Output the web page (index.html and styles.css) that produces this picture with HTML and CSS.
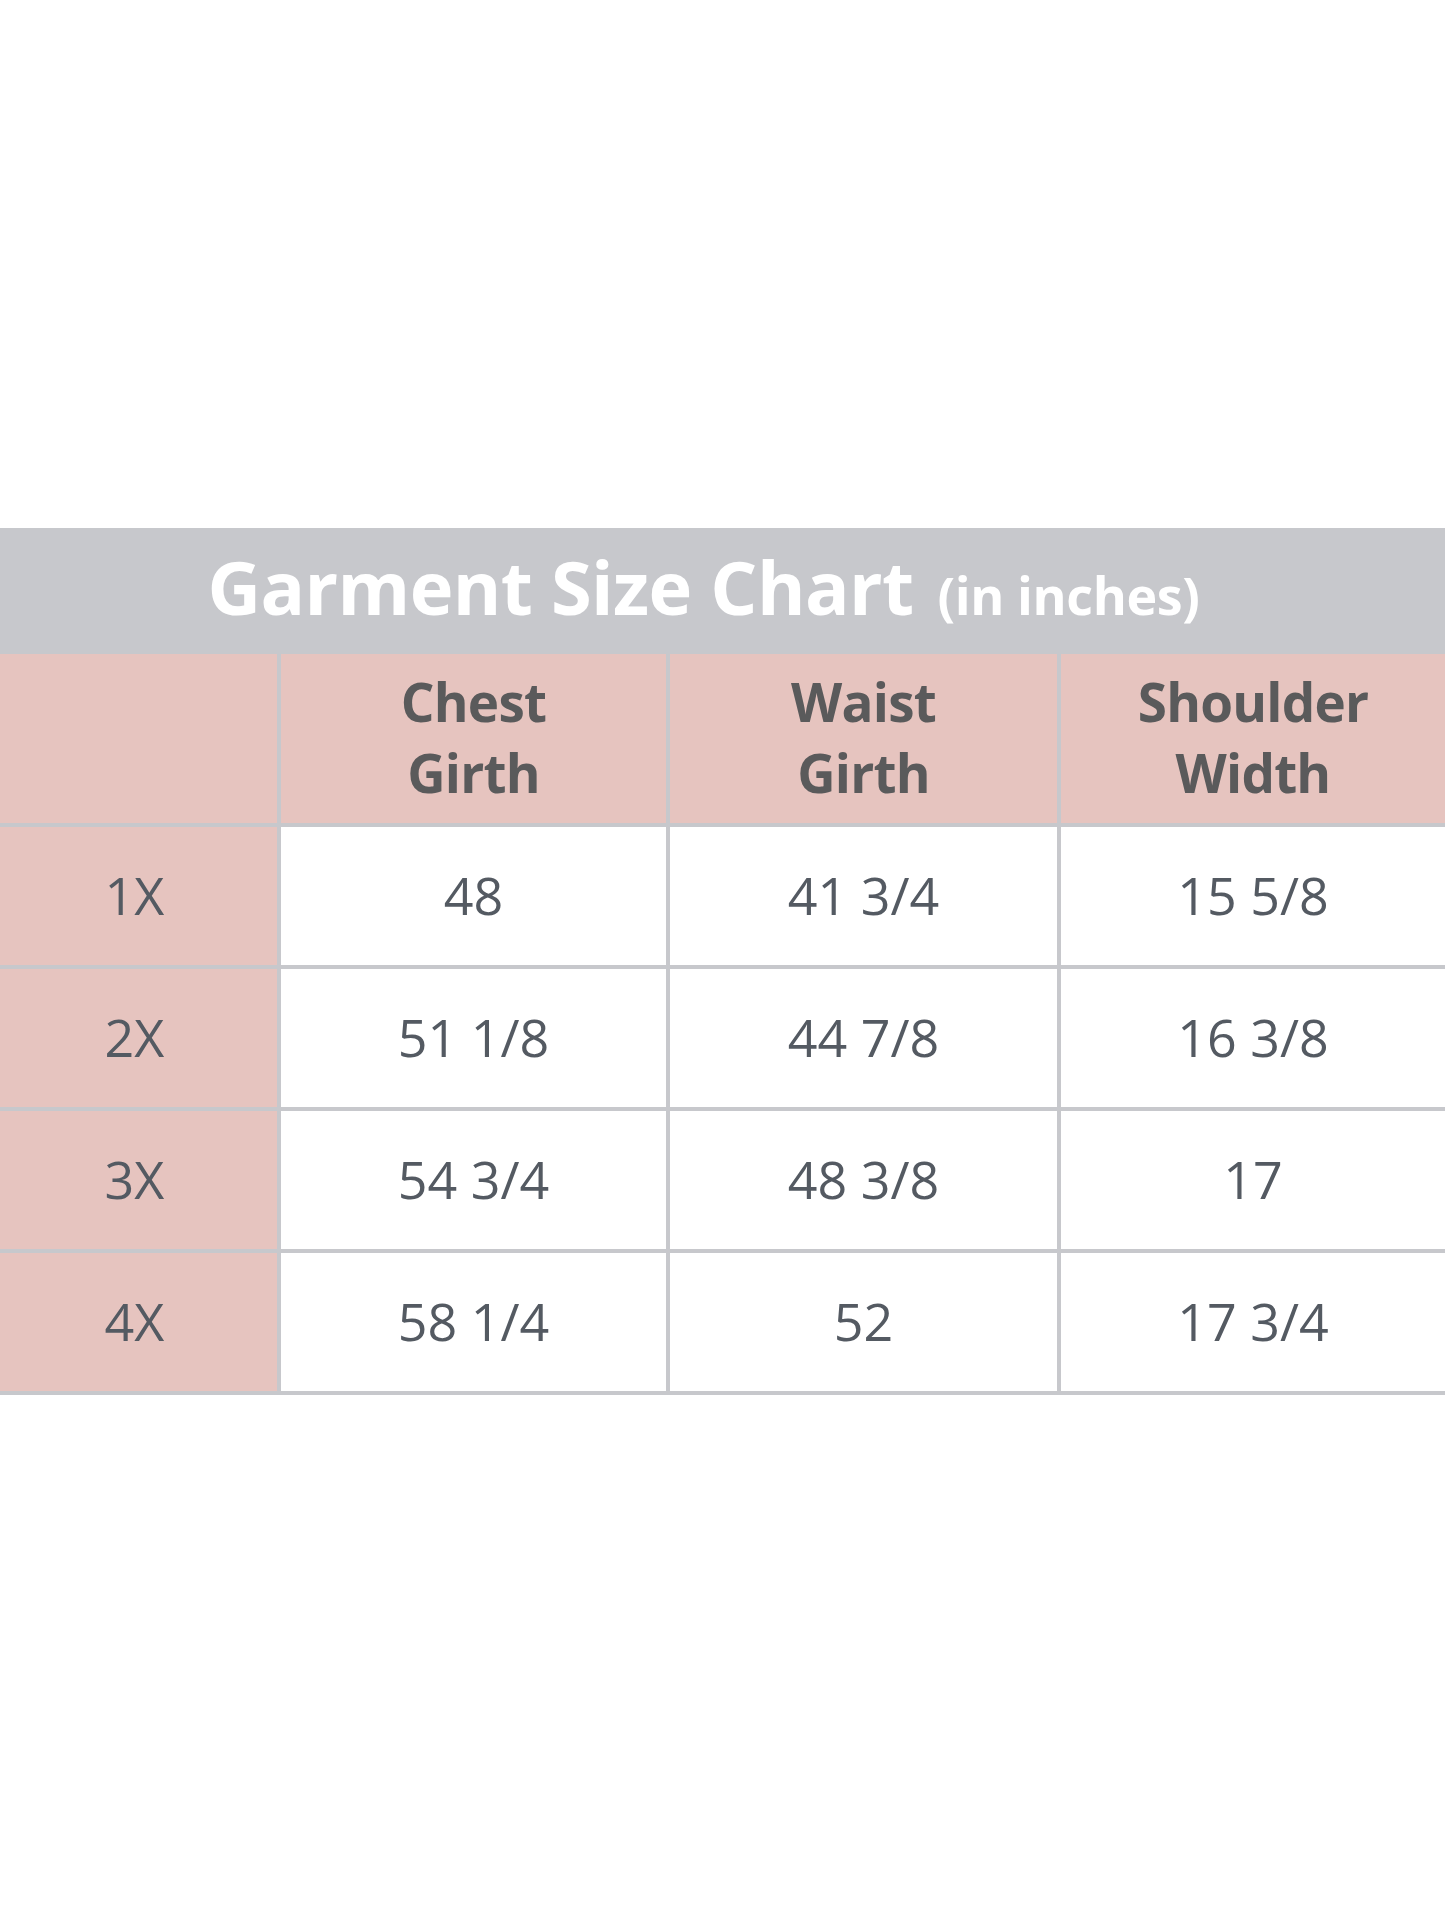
FILE: index.html
```html
<!DOCTYPE html>
<html lang="en">
<head>
<meta charset="utf-8">
<title>Garment Size Chart</title>
<link rel="stylesheet" href="styles.css">
</head>
<body>
<div class="page">
  <div class="title-bar">
    <h1 class="title">Garment Size Chart<span class="unit">(in inches)</span></h1>
  </div>
  <div class="chart">
    <div class="cell head"></div>
    <div class="cell head">Chest<br>Girth</div>
    <div class="cell head">Waist<br>Girth</div>
    <div class="cell head">Shoulder<br>Width</div>

    <div class="cell size">1X</div>
    <div class="cell val">48</div>
    <div class="cell val">41 3/4</div>
    <div class="cell val">15 5/8</div>

    <div class="cell size">2X</div>
    <div class="cell val">51 1/8</div>
    <div class="cell val">44 7/8</div>
    <div class="cell val">16 3/8</div>

    <div class="cell size">3X</div>
    <div class="cell val">54 3/4</div>
    <div class="cell val">48 3/8</div>
    <div class="cell val">17</div>

    <div class="cell size">4X</div>
    <div class="cell val">58 1/4</div>
    <div class="cell val">52</div>
    <div class="cell val">17 3/4</div>
  </div>
</div>
</body>
</html>
```

FILE: styles.css
```css
html, body {
  margin: 0;
  padding: 0;
  background: #ffffff;
}

body {
  font-family: "Open Sans", "Noto Sans", "DejaVu Sans", sans-serif;
}

.page {
  width: 1445px;
  padding-top: 528px;
}

.title-bar {
  height: 126px;
  background: #c7c8cc;
  display: flex;
  align-items: center;
  justify-content: center;
  padding-right: 38px;
  padding-bottom: 8px;
  box-sizing: border-box;
}

.title {
  margin: 0;
  color: #ffffff;
  font-size: 74px;
  font-weight: 700;
  line-height: 1;
  white-space: nowrap;
  letter-spacing: -0.6px;
}

.unit {
  font-size: 52px;
  margin-left: 24px;
  letter-spacing: -0.4px;
}

.chart {
  display: grid;
  grid-template-columns: 277px 385px 387px 384px;
  grid-template-rows: 169px repeat(4, 138px);
  gap: 4px;
  padding-bottom: 4px;
  background: #c7c8cc;
}

.cell {
  display: flex;
  align-items: center;
  justify-content: center;
  text-align: center;
}

.head {
  background: #e6c4bf;
  color: #5a5a5b;
  font-size: 53px;
  font-weight: 700;
  line-height: 71px;
  letter-spacing: -0.8px;
  padding-bottom: 4px;
}

.size {
  background: #e6c4bf;
  color: #545a62;
  font-size: 52px;
  font-weight: 400;
  padding-right: 8px;
  padding-bottom: 4px;
}

.val {
  background: #ffffff;
  color: #545a62;
  font-size: 52px;
  font-weight: 400;
  padding-bottom: 4px;
}
```
